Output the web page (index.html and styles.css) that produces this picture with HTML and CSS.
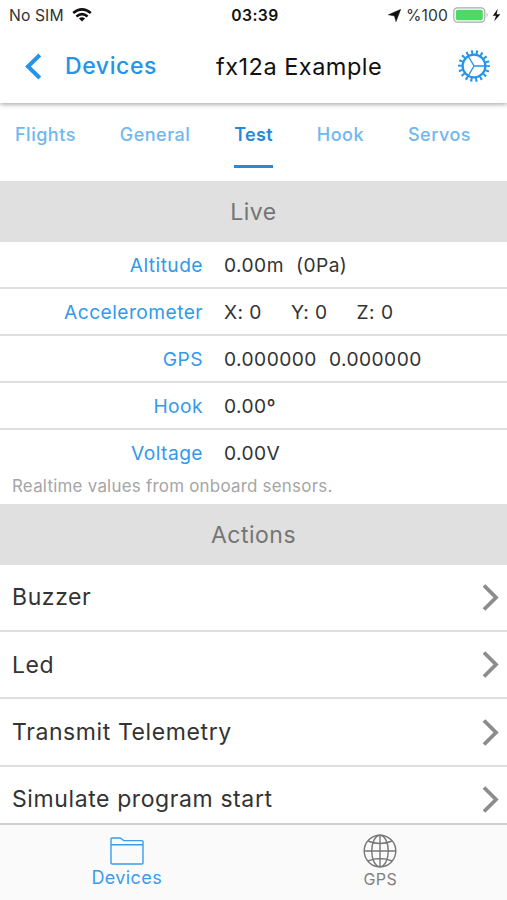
FILE: index.html
```html
<!DOCTYPE html>
<html lang="en">
<head>
    <meta charset="UTF-8">
    <meta name="viewport" content="width=device-width, initial-scale=1.0">
    <title>fx12a Example</title>
    <link rel="stylesheet" href="styles.css">
</head>
<body>

<div class="app">
    <!-- Header: status bar and navigation -->
    <header class="header">
        <div class="statusbar">
            <div class="status-left">
                <span class="carrier">No SIM</span>
                <svg class="wifi" width="20" height="14" viewBox="0 0 20 14" fill="none" stroke="#111" stroke-width="2.6">
                    <path d="M1.2 5.1Q10 -2.3 18.8 5.1"/>
                    <path d="M4.4 8.4Q10 3.8 15.6 8.4"/>
                    <path d="M10 13.4L6.9 10.4Q10 8 13.1 10.4Z" fill="#111" stroke="none"/>
                </svg>
            </div>
            <span class="clock">03:39</span>
            <div class="status-right">
                <svg width="13" height="13" viewBox="0 0 13 13" fill="#111"><path d="M12.8 .2L8 12.8L6.4 7L.2 5.8Z" stroke="#111" stroke-width=".4"/></svg>
                <span class="percent">%100</span>
                <svg class="battery" width="48" height="16" viewBox="0 0 48 16">
                    <rect x=".8" y=".8" width="31" height="14.4" rx="3.6" fill="#fff" stroke="#aaa" stroke-width="1.2"/>
                    <rect x="2.8" y="2.8" width="27" height="10.4" rx="1.8" fill="#4cd964"/>
                    <path d="M33.6 5.6Q35.6 8 33.6 10.4Z" fill="#aaa"/>
                    <path d="M44.8 1.8L39.8 8.7H43L41.2 14.2L47.4 7.2H43.6Z" fill="#111"/>
                </svg>
            </div>
        </div>
        <div class="navbar">
            <a class="back">
                <svg width="17" height="27" viewBox="0 0 17 27" fill="none" stroke="#2593e8" stroke-width="4"><path d="M14.8 2L3 13.5L14.8 25"/></svg>
                <span class="back-label">Devices</span>
            </a>
            <h1 class="title">fx12a Example</h1>
            <svg class="gear" width="34" height="34" viewBox="-17 -17 34 34" fill="none" stroke="#2593e8">
                <circle r="11.4" stroke-width="2.2"/>
                <circle r="13.9" stroke-width="4" stroke-dasharray="2 2.852" transform="rotate(-4)"/>
                <path d="M0 0H11M0 0L-5.5 -9.5M0 0L-5.5 9.5" stroke-width="1.4"/>
            </svg>
        </div>
    </header>

    <nav class="tabs">
        <a class="tab">Flights</a>
        <a class="tab">General</a>
        <a class="tab active">Test</a>
        <a class="tab">Hook</a>
        <a class="tab">Servos</a>
    </nav>

    <main class="content">
        <!-- Sensor values -->
        <h2 class="section">Live</h2>
        <div class="row"><span class="label">Altitude</span><span class="value"><span>0.00m</span><span>(0Pa)</span></span></div>
        <div class="row"><span class="label">Accelerometer</span><span class="value axes"><span>X: 0</span><span>Y: 0</span><span>Z: 0</span></span></div>
        <div class="row"><span class="label">GPS</span><span class="value"><span>0.000000</span><span>0.000000</span></span></div>
        <div class="row"><span class="label">Hook</span><span class="value"><span>0.00º</span></span></div>
        <div class="row last"><span class="label">Voltage</span><span class="value"><span>0.00V</span></span></div>
        <p class="hint">Realtime values from onboard sensors.</p>

        <!-- Actions -->
        <h2 class="section">Actions</h2>
        <a class="action"><span>Buzzer</span><svg class="chevron" viewBox="0 0 17 27"><path d="M2 1.5L14 13.5L2 25.5"/></svg></a>
        <a class="action"><span>Led</span><svg class="chevron" viewBox="0 0 17 27"><path d="M2 1.5L14 13.5L2 25.5"/></svg></a>
        <a class="action"><span>Transmit Telemetry</span><svg class="chevron" viewBox="0 0 17 27"><path d="M2 1.5L14 13.5L2 25.5"/></svg></a>
        <a class="action"><span>Simulate program start</span><svg class="chevron" viewBox="0 0 17 27"><path d="M2 1.5L14 13.5L2 25.5"/></svg></a>
    </main>

    <footer class="bottombar">
        <a class="bottom-item active">
            <svg width="34" height="28" viewBox="0 0 34 28" fill="none" stroke="#3a9cea" stroke-width="1.4"><path d="M1 26V2.2Q1 1 2.2 1H9.6Q10.6 1 11.4 1.8L13.8 3.6H31.8Q33 3.6 33 4.6V26Q33 27 31.8 27H2.2Q1 27 1 26ZM1 7.8H33"/></svg>
            <span class="bottom-label">Devices</span>
        </a>
        <a class="bottom-item">
            <svg width="34" height="34" viewBox="0 0 34 34" fill="none" stroke="#777" stroke-width="1.4"><circle cx="17" cy="17" r="15.8"/><ellipse cx="17" cy="17" rx="8.3" ry="15.8"/><path d="M17 1V33M1 17H33M4.8 7Q17 12 29.2 7M4.8 27Q17 22 29.2 27"/></svg>
            <span class="bottom-label gps">GPS</span>
        </a>
    </footer>
</div>

</body>
</html>
```
FILE: styles.css
```css
* { box-sizing: border-box; }

body {
    margin: 0;
    font-family: Inter, "Liberation Sans", sans-serif;
    color: #333;
    background: #fff;
}

h1, h2, p { margin: 0; font-weight: 400; }

.app {
    height: 900px;
    display: flex;
    flex-direction: column;
    overflow: hidden;
}

/* Header */
.header {
    position: relative;
    flex: none;
    height: 103px;
    background: #fff;
    box-shadow: 0 1px 5px rgba(0, 0, 0, 0.4);
}

.statusbar {
    height: 30px;
    padding: 0 6px 0 9px;
    display: grid;
    grid-template-columns: 1fr auto 1fr;
    align-items: center;
    font-size: 15.7px;
}

.status-left, .status-right { display: flex; align-items: center; }
.status-left { gap: 8px; }
.status-right { justify-content: flex-end; gap: 5px; }
.carrier, .percent { letter-spacing: 0.1px; }
.clock { font-weight: 600; color: #111; letter-spacing: 0.4px; }

.navbar {
    height: 72px;
    padding: 0 16px 0 25px;
    display: grid;
    grid-template-columns: 191px 1fr 34px;
    align-items: center;
}

.back { display: flex; align-items: center; gap: 23px; color: #2593e8; }
.back-label { font-size: 23px; font-weight: 500; letter-spacing: 0.6px; }
.title { font-size: 23.5px; font-weight: 400; color: #111; letter-spacing: 0.5px; }

/* Tabs */
.tabs {
    flex: none;
    height: 78px;
    padding: 0 36px 13px 15px;
    display: flex;
    justify-content: space-between;
    font-size: 18px;
    font-weight: 500;
    letter-spacing: 0.5px;
    color: #70b7f0;
}

.tab { height: 65px; padding-top: 20px; line-height: 23px; white-space: nowrap; }
.tab.active { color: #2589dc; font-weight: 600; letter-spacing: 0.3px; border-bottom: 3px solid #2589dc; }

/* Content */
.content { flex: 1; min-height: 0; overflow: hidden; }

.section {
    height: 61px;
    line-height: 63px;
    background: #e0e0e0;
    color: #757575;
    font-size: 23px;
    letter-spacing: 0.5px;
    text-align: center;
}

.row {
    height: 47.1px;
    border-bottom: 2px solid #dedede;
    display: grid;
    grid-template-columns: 203px 1fr;
    gap: 21px;
    align-items: center;
    font-size: 19.2px;
    letter-spacing: 0.45px;
}

.row.last { border-bottom: 0; height: 46px; }
.label { color: #3399eb; text-align: right; }
.value { display: flex; gap: 12px; }
.value.axes { gap: 29px; }

.hint {
    height: 27.2px;
    padding-left: 12px;
    line-height: 21px;
    font-size: 16.9px;
    letter-spacing: 0.25px;
    color: #a5a5a5;
}

.action {
    height: 67.4px;
    padding: 0 8px 0 12px;
    border-bottom: 2px solid #dedede;
    display: flex;
    align-items: center;
    justify-content: space-between;
    font-size: 23px;
    letter-spacing: 0.6px;
}

.chevron { width: 17px; height: 27px; fill: none; stroke: #8c8c8c; stroke-width: 3.8; }

/* Bottom navigation */
.bottombar {
    flex: none;
    height: 77px;
    border-top: 2px solid #cfcfcf;
    background: #fafafa;
    display: grid;
    grid-template-columns: 1fr 1fr;
}

.bottom-item {
    display: flex;
    flex-direction: column;
    align-items: center;
    justify-content: flex-end;
    padding-bottom: 10px;
    color: #808080;
}

.bottom-item.active { color: #3a9cea; }
.bottom-item.active svg { margin-bottom: 1px; }
.bottom-label { font-size: 18px; line-height: 24px; letter-spacing: 0.4px; }
.bottom-label.gps { font-size: 16px; line-height: 22px; }
```
